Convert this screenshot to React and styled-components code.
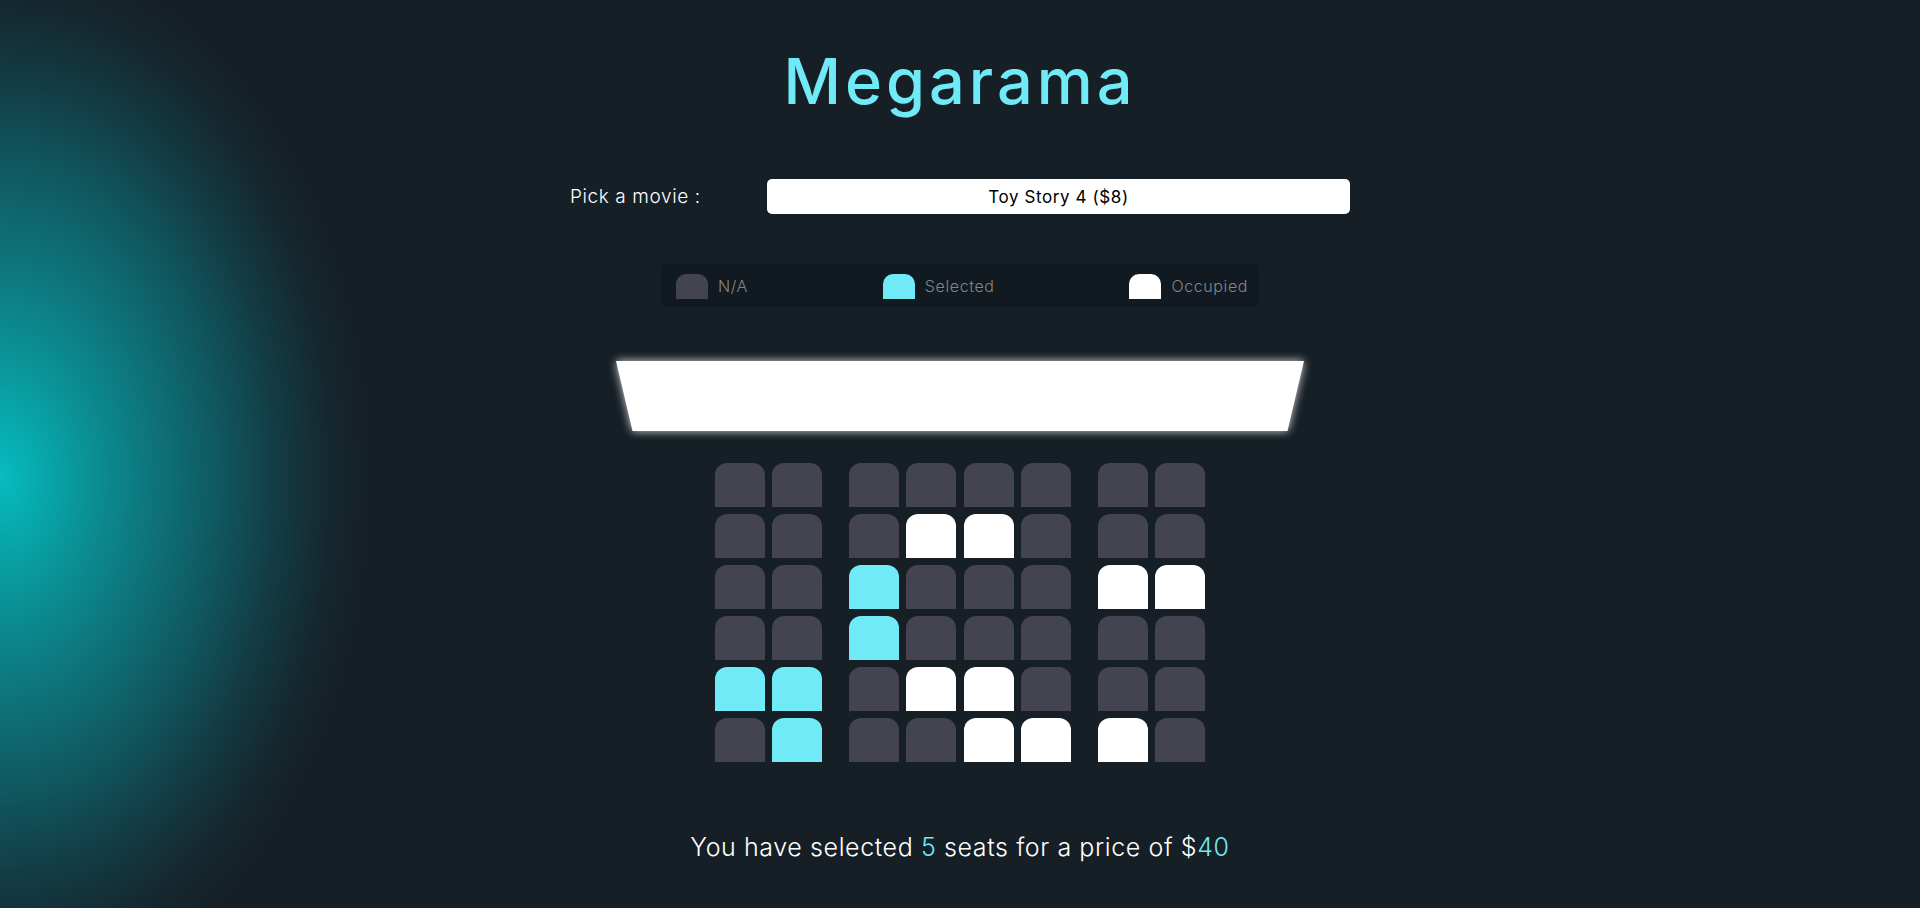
import React, { useState } from "react";
import styled, { createGlobalStyle } from "styled-components";

const GlobalStyle = createGlobalStyle`
  html, body {
    margin: 0;
    padding: 0;
    height: 100%;
  }
  body {
    background: #161f26;
    font-family: Inter, "Noto Sans", sans-serif;
  }
  * {
    box-sizing: border-box;
  }
`;

const Page = styled.div`
  min-height: 100vh;
  display: flex;
  flex-direction: column;
  align-items: center;
  background: radial-gradient(
      ellipse 370px 530px at 0 478px,
      #06bcbf 0%,
      #08a3a7 14%,
      #0b8a8f 28%,
      #0e7076 44%,
      #10565e 60%,
      #133c45 75%,
      #15282f 89%,
      rgba(22, 31, 38, 0) 100%
    ),
    #161f26;
  color: #fff;
`;

const Title = styled.h1`
  margin: 50px 0 0;
  font-size: 63px;
  line-height: 1;
  font-weight: 500;
  letter-spacing: 4px;
  color: #6feaf6;
`;

const PickerRow = styled.div`
  display: flex;
  align-items: center;
  width: 780px;
  margin-top: 66px;
`;

const PickerLabel = styled.label`
  flex: 0 0 197px;
  font-size: 19px;
  font-weight: 300;
  letter-spacing: 0.6px;
  color: #fff;
`;

const MovieSelect = styled.select`
  flex: 1;
  height: 35px;
  border: 0;
  border-radius: 5px;
  background: #fff;
  color: #000;
  font-family: inherit;
  font-size: 17px;
  letter-spacing: 0.6px;
  text-align: center;
  text-align-last: center;
  appearance: none;
  outline: none;
`;

const Legend = styled.ul`
  display: flex;
  justify-content: space-between;
  align-items: center;
  list-style: none;
  width: 598px;
  height: 43px;
  margin: 50px 0 0;
  padding: 0 11px 0 15px;
  border-radius: 5px;
  background: #121a21;
`;

const LegendItem = styled.li`
  display: flex;
  align-items: center;
  gap: 10px;
  font-size: 16px;
  font-weight: 300;
  letter-spacing: 0.6px;
  color: #858585;
`;

const seatColors = {
  na: "#444451",
  selected: "#6feaf6",
  occupied: "#ffffff",
};

const LegendSeat = styled.span`
  display: block;
  width: 32px;
  height: 25px;
  margin-top: 2px;
  border-radius: 10px 10px 0 0;
  background: ${(p) => seatColors[p.$kind]};
`;

const ScreenGlow = styled.div`
  margin-top: 54px;
  filter: drop-shadow(0 0 5px rgba(255, 255, 255, 0.85));
`;

const Screen = styled.div`
  width: 688px;
  height: 70px;
  background: #fff;
  clip-path: polygon(0 0, 100% 0, 97.6% 100%, 2.4% 100%);
`;

const SeatMap = styled.div`
  display: flex;
  flex-direction: column;
  gap: 7px;
  margin-top: 32px;
`;

const SeatRow = styled.div`
  display: flex;
`;

const Seat = styled.div`
  width: 50px;
  height: 44px;
  margin-right: ${(p) => (p.$aisle ? "26.5px" : p.$last ? "0" : "7.5px")};
  border-radius: 12px 12px 0 0;
  background: ${(p) => seatColors[p.$kind]};
  cursor: ${(p) => (p.$kind === "occupied" ? "default" : "pointer")};
`;

const Summary = styled.p`
  margin: 67px 0 0;
  font-size: 25px;
  line-height: 36px;
  font-weight: 300;
  letter-spacing: 0.6px;
  color: #fff;
`;

const Count = styled.span`
  color: #6feaf6;
`;

const layout = [
  "nn|nnnn|nn",
  "nn|noon|nn",
  "nn|snnn|oo",
  "nn|snnn|nn",
  "ss|noon|nn",
  "ns|nnoo|on",
];

const codeToKind = { n: "na", s: "selected", o: "occupied" };

function buildRows() {
  return layout.map((line) => {
    const seats = [];
    const chars = line.split("");
    chars.forEach((c, i) => {
      if (c === "|") return;
      seats.push({
        kind: codeToKind[c],
        aisle: chars[i + 1] === "|",
      });
    });
    return seats;
  });
}

export default function App() {
  const [rows, setRows] = useState(buildRows);
  const price = 8;

  const toggle = (r, s) => {
    setRows((prev) =>
      prev.map((row, ri) =>
        row.map((seat, si) => {
          if (ri !== r || si !== s || seat.kind === "occupied") return seat;
          return { ...seat, kind: seat.kind === "selected" ? "na" : "selected" };
        })
      )
    );
  };

  const count = rows.flat().filter((s) => s.kind === "selected").length;

  return (
    <Page>
      <GlobalStyle />
      <Title>Megarama</Title>

      <PickerRow>
        <PickerLabel htmlFor="movie">Pick a movie :</PickerLabel>
        <MovieSelect id="movie" defaultValue="8">
          <option value="8">Toy Story 4 ($8)</option>
          <option value="10">Avengers: Endgame ($10)</option>
          <option value="12">Joker ($12)</option>
        </MovieSelect>
      </PickerRow>

      <Legend>
        <LegendItem>
          <LegendSeat $kind="na" />
          N/A
        </LegendItem>
        <LegendItem>
          <LegendSeat $kind="selected" />
          Selected
        </LegendItem>
        <LegendItem>
          <LegendSeat $kind="occupied" />
          Occupied
        </LegendItem>
      </Legend>

      <ScreenGlow>
        <Screen />
      </ScreenGlow>

      <SeatMap>
        {rows.map((row, ri) => (
          <SeatRow key={ri}>
            {row.map((seat, si) => (
              <Seat
                key={si}
                $kind={seat.kind}
                $aisle={seat.aisle}
                $last={si === row.length - 1}
                onClick={() => toggle(ri, si)}
              />
            ))}
          </SeatRow>
        ))}
      </SeatMap>

      <Summary>
        You have selected <Count>{count}</Count> seats for a price of $
        <Count>{count * price}</Count>
      </Summary>
    </Page>
  );
}
